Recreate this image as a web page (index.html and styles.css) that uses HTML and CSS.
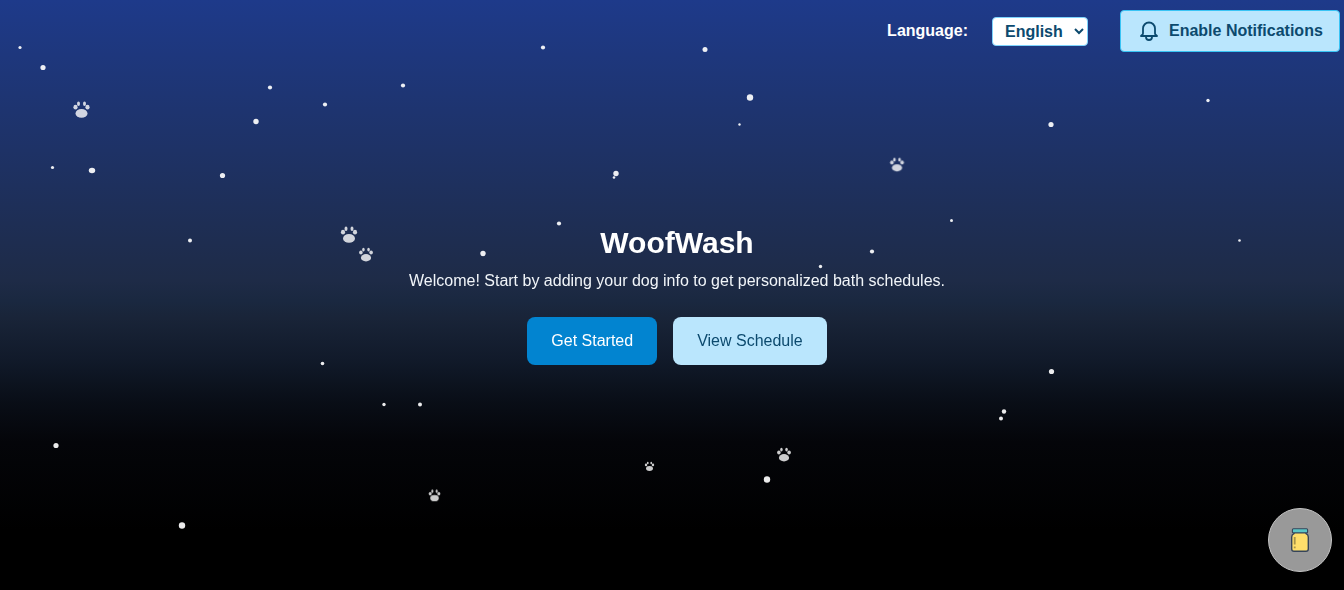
FILE: index.html
```html
<!DOCTYPE html>
<html lang="en">
<head>
<meta charset="utf-8">
<title>WoofWash</title>
<link rel="stylesheet" href="styles.css">
</head>
<body>
<div class="page">
  <svg class="sky" width="1344" height="590" viewBox="0 0 1344 590" aria-hidden="true">
    <defs>
      <g id="paw">
        <ellipse cx="0" cy="4.4" rx="6" ry="4.3"/>
        <ellipse cx="-3" cy="-5.2" rx="1.5" ry="2.3"/>
        <ellipse cx="3" cy="-5.2" rx="1.5" ry="2.3"/>
        <ellipse cx="-6" cy="-1.8" rx="2.1" ry="2.4"/>
        <ellipse cx="6" cy="-1.8" rx="2.1" ry="2.4"/>
      </g>
    </defs>
    <g class="stars">
      <circle cx="20" cy="47.5" r="1.6"/><circle cx="43" cy="67.5" r="2.6"/><circle cx="52.5" cy="167.5" r="1.6"/>
      <ellipse cx="92" cy="170.5" rx="3.2" ry="2.7"/><circle cx="222.5" cy="175.5" r="2.6"/><circle cx="190" cy="240.5" r="2"/>
      <circle cx="270" cy="87.5" r="2.1"/><circle cx="256" cy="121.5" r="2.7"/><circle cx="325" cy="104.5" r="2.1"/>
      <circle cx="403" cy="85.5" r="2.1"/><circle cx="543" cy="47.5" r="2.1"/><circle cx="705" cy="49.5" r="2.5"/>
      <circle cx="750" cy="97.5" r="3.2"/><circle cx="739.5" cy="124.5" r="1.2"/><circle cx="616" cy="173.5" r="2.7"/>
      <circle cx="614" cy="177.5" r="1.3"/><circle cx="559" cy="223.5" r="2.1"/><circle cx="483" cy="253.5" r="2.7"/>
      <circle cx="820.5" cy="266.5" r="1.7"/><circle cx="872" cy="251.5" r="2.1"/><circle cx="951.5" cy="220.5" r="1.5"/>
      <circle cx="1051" cy="124.5" r="2.6"/><circle cx="1208" cy="100.5" r="1.7"/><circle cx="1239.5" cy="240.5" r="1.3"/>
      <circle cx="1051.5" cy="371.5" r="2.6"/><circle cx="1004" cy="411.5" r="2.2"/><circle cx="1001" cy="418.5" r="2"/>
      <circle cx="767" cy="479.5" r="3.2"/><circle cx="322.5" cy="363.5" r="1.8"/><circle cx="384" cy="404.5" r="1.7"/>
      <circle cx="420" cy="404.5" r="2"/><circle cx="56" cy="445.5" r="2.6"/><circle cx="182" cy="525.5" r="3.2"/>
    </g>
    <g class="paws">
      <use href="#paw" transform="translate(81.5 109)"/>
      <use href="#paw" transform="translate(349 234)"/>
      <use href="#paw" transform="translate(366 254) scale(.85)"/>
      <use href="#paw" transform="translate(897 164) scale(.85)"/>
      <use href="#paw" transform="translate(649.5 466) scale(.58)"/>
      <use href="#paw" class="bright" transform="translate(784 454) scale(.85)"/>
      <use href="#paw" class="bright" transform="translate(434.5 495) scale(.72)"/>
    </g>
  </svg>

  <header class="topbar">
    <label class="lang-label" for="lang">Language:</label>
    <select class="lang-select" id="lang"><option>English</option></select>
    <button class="notify" type="button">
      <svg class="bell" width="24" height="24" viewBox="0 0 24 24" fill="none" stroke="currentColor" stroke-width="1.8" stroke-linecap="round" stroke-linejoin="round">
        <path d="M15 17h5l-1.405-1.405A2.032 2.032 0 0 1 18 14.158V9.5a6 6 0 0 0-12 0v4.659c0 .538-.214 1.055-.595 1.436L4 17h5m6 0v1a3 3 0 1 1-6 0v-1m6 0H9"/>
      </svg>
      Enable Notifications
    </button>
  </header>

  <main class="hero">
    <h1 class="title">WoofWash</h1>
    <p class="lead">Welcome! Start by adding your dog info to get personalized bath schedules.</p>
    <div class="actions">
      <button class="btn btn-primary" type="button">Get Started</button>
      <button class="btn btn-secondary" type="button">View Schedule</button>
    </div>
  </main>

  <button class="fab" type="button" aria-label="Jar">
    <svg width="18" height="24" viewBox="0 0 18 24">
      <path d="M3 4v1.6Q.7 6.6.7 9v12a2.3 2.3 0 0 0 2.3 2.3h12a2.3 2.3 0 0 0 2.3-2.3V9q0-2.4-2.3-3.4V4z" fill="#ffdf6b" stroke="#35445a" stroke-width="1.4"/>
      <rect x="1.4" y=".7" width="15.2" height="4.2" rx="1" fill="#5cc6c6" stroke="#35445a" stroke-width="1.1"/>
      <rect x="2.8" y="9" width="1.8" height="7.5" fill="#a8954a"/>
      <rect x="2.8" y="18.5" width="1.8" height="1.8" fill="#a8954a"/>
    </svg>
  </button>
</div>
</body>
</html>
```
FILE: styles.css
```css
* { box-sizing: border-box; }
html, body { margin: 0; height: 100%; }
body {
  font-family: "Liberation Sans", Arial, sans-serif;
  color: #fff;
  overflow: hidden;
}
.page {
  position: relative;
  height: 590px;
  display: grid;
  grid-template: 1fr / 1fr;
  background: linear-gradient(to bottom, #1e3a8a 0%, #1e2b47 47.5%, #1a2840 51%, #192438 54%, #111a2a 61%, #090e17 68%, #040509 75%, #000 90%);
  overflow: hidden;
}
.sky { position: absolute; inset: 0; }
.stars { fill: #fff; opacity: .92; }
.paws { fill: #fff; opacity: .8; }
.paws .bright { opacity: 1; }
.topbar {
  grid-area: 1 / 1;
  align-self: start;
  position: relative;
  display: flex;
  justify-content: flex-end;
  align-items: center;
  padding: 10px 4px 0 0;
}
.lang-label { font-size: 16px; font-weight: 700; margin-right: 24px; }
.lang-select {
  width: 96px;
  height: 29px;
  margin-right: 32px;
  padding: 0 4px 0 8px;
  font: 700 16px "Liberation Sans", Arial, sans-serif;
  color: #0c4a6e;
  background: #fff;
  border: 1px solid #7dd3fc;
  border-radius: 4px;
}
.notify {
  display: flex;
  align-items: center;
  gap: 8px;
  width: 220px;
  height: 42px;
  padding: 0 16px;
  font: 700 16px "Liberation Sans", Arial, sans-serif;
  color: #0c4a6e;
  background: #bae6fd;
  border: 1px solid #38c4f5;
  border-radius: 4px;
}
.bell { flex: none; }
.hero {
  grid-area: 1 / 1;
  align-self: center;
  position: relative;
  display: flex;
  flex-direction: column;
  align-items: center;
  padding-left: 10px;
}
.title { margin: 0; font-size: 30px; line-height: 36px; font-weight: 700; }
.lead { margin: 8px 0 0; font-size: 16px; line-height: 24px; color: #f1f5f9; }
.actions { display: flex; gap: 16px; margin-top: 24px; }
.btn {
  height: 48px;
  padding: 0 24px;
  border: 0;
  border-radius: 8px;
  font: 400 16px "Liberation Sans", Arial, sans-serif;
}
.btn-primary { background: #0284d0; color: #fff; }
.btn-secondary { background: #bae6fd; color: #0c4a6e; }
.fab {
  position: absolute;
  right: 12px;
  bottom: 18px;
  width: 64px;
  height: 64px;
  display: flex;
  align-items: center;
  justify-content: center;
  padding: 0;
  background: #999;
  border: 1px solid #c4c4c4;
  border-radius: 50%;
}
```
